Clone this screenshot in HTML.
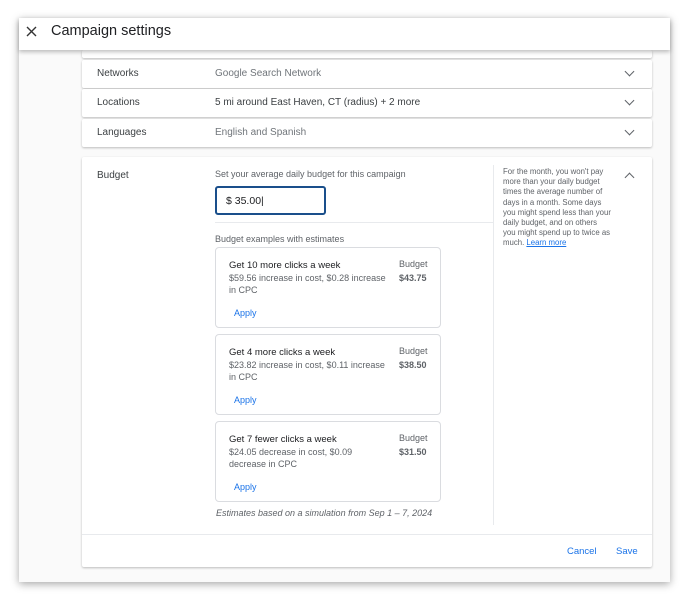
<!DOCTYPE html>
<html><head><style>
*{box-sizing:border-box;margin:0;padding:0}
body{width:689px;height:600px;background:#fff;font-family:"Liberation Sans",sans-serif;position:relative;overflow:hidden;color:#3c4043}
.dlg{position:absolute;left:19px;top:18px;width:651px;height:564px;background:#fafafa;box-shadow:0 2px 8px rgba(0,0,0,.35)}
.hdr{position:absolute;left:0;top:0;width:651px;height:32px;background:#fff;box-shadow:0 2px 4px rgba(0,0,0,.25);z-index:2}
.hdr svg{position:absolute;left:7px;top:8px}
.hdr .t{position:absolute;left:32px;top:5px;font-size:14.5px;color:#202124}
.card{position:absolute;left:63px;width:570px;background:#fff;box-shadow:0 1px 2px rgba(0,0,0,.25);border-radius:2px}
.row{height:28px;font-size:10px}
.row .l{position:absolute;left:15px;top:8px;color:#3c4043}
.row .v{position:absolute;left:133px;top:8px;color:#70757a}
.chev{position:absolute;width:7px;height:7px;border-right:1.5px solid #5f6368;border-bottom:1.5px solid #5f6368;transform:rotate(45deg)}
.ex{position:absolute;left:133px;width:226px;height:81px;border:1px solid #dadce0;border-radius:4px;background:#fff;font-size:9px}
.ex .h{position:absolute;left:13px;top:12px;color:#202124;font-size:9.5px}
.ex .d{position:absolute;left:13px;top:24px;width:160px;line-height:12px;color:#5f6368}
.ex .b{position:absolute;left:183px;top:11px;color:#5f6368}
.ex .p{position:absolute;left:183px;top:25px;font-weight:bold;color:#5f6368}
.ex .a{position:absolute;left:18px;top:60px;color:#1a73e8}
</style></head><body>
<div class="dlg">
<div class="hdr"><svg width="11" height="11" viewBox="0 0 11 11"><path d="M1 1L10 10M10 1L1 10" stroke="#333" stroke-width="1.4"/></svg><span class="t">Campaign settings</span></div>
<div class="card" style="top:32px;height:8px"></div>
<div class="card row" style="top:42px"><span class="l">Networks</span><span class="v">Google Search Network</span><span class="chev" style="left:544px;top:8px"></span></div>
<div class="card row" style="top:71px"><span class="l">Locations</span><span class="v" style="color:#3c4043">5 mi around East Haven, CT (radius) + 2 more</span><span class="chev" style="left:544px;top:8px"></span></div>
<div class="card row" style="top:101px"><span class="l">Languages</span><span class="v">English and Spanish</span><span class="chev" style="left:544px;top:8px"></span></div>
<div class="card" style="top:139px;height:410px">
<span style="position:absolute;left:15px;top:13px;font-size:10px">Budget</span>
<span style="position:absolute;left:133px;top:12px;font-size:9px;color:#5f6368">Set your average daily budget for this campaign</span>
<div style="position:absolute;left:133px;top:29px;width:111px;height:29px;border:2px solid #1a4f8b;border-radius:3px;font-size:10.5px;padding:7px 0 0 9px;color:#202124">$ 35.00|</div>
<div style="position:absolute;left:133px;top:65px;width:278px;height:1px;background:#e8eaed"></div>
<span style="position:absolute;left:133px;top:77px;font-size:9px;color:#5f6368">Budget examples with estimates</span>
<div class="ex" style="top:90px"><span class="h">Get 10 more clicks a week</span><span class="d">$59.56 increase in cost, $0.28 increase in CPC</span><span class="b">Budget</span><span class="p">$43.75</span><span class="a">Apply</span></div>
<div class="ex" style="top:177px"><span class="h">Get 4 more clicks a week</span><span class="d">$23.82 increase in cost, $0.11 increase in CPC</span><span class="b">Budget</span><span class="p">$38.50</span><span class="a">Apply</span></div>
<div class="ex" style="top:264px"><span class="h">Get 7 fewer clicks a week</span><span class="d">$24.05 decrease in cost, $0.09 decrease in CPC</span><span class="b">Budget</span><span class="p">$31.50</span><span class="a">Apply</span></div>
<span style="position:absolute;left:134px;top:351px;font-size:9px;font-style:italic;color:#5f6368">Estimates based on a simulation from Sep 1 – 7, 2024</span>
<div style="position:absolute;left:411px;top:8px;width:1px;height:360px;background:#e8eaed"></div>
<div style="position:absolute;left:421px;top:10px;width:108px;font-size:7.8px;line-height:10.2px;color:#5f6368">For the month, you won't pay more than your daily budget times the average number of days in a month. Some days you might spend less than your daily budget, and on others you might spend up to twice as much. <span style="color:#1a73e8;text-decoration:underline">Learn more</span></div>
<span class="chev" style="left:544px;top:17px;transform:rotate(225deg)"></span>
<div style="position:absolute;left:0;top:377px;width:570px;height:1px;background:#e8eaed"></div>
<span style="position:absolute;left:485px;top:389px;font-size:9.5px;color:#1a73e8">Cancel</span>
<span style="position:absolute;left:534px;top:389px;font-size:9.5px;color:#1a73e8">Save</span>
</div>
</div>
</body></html>
